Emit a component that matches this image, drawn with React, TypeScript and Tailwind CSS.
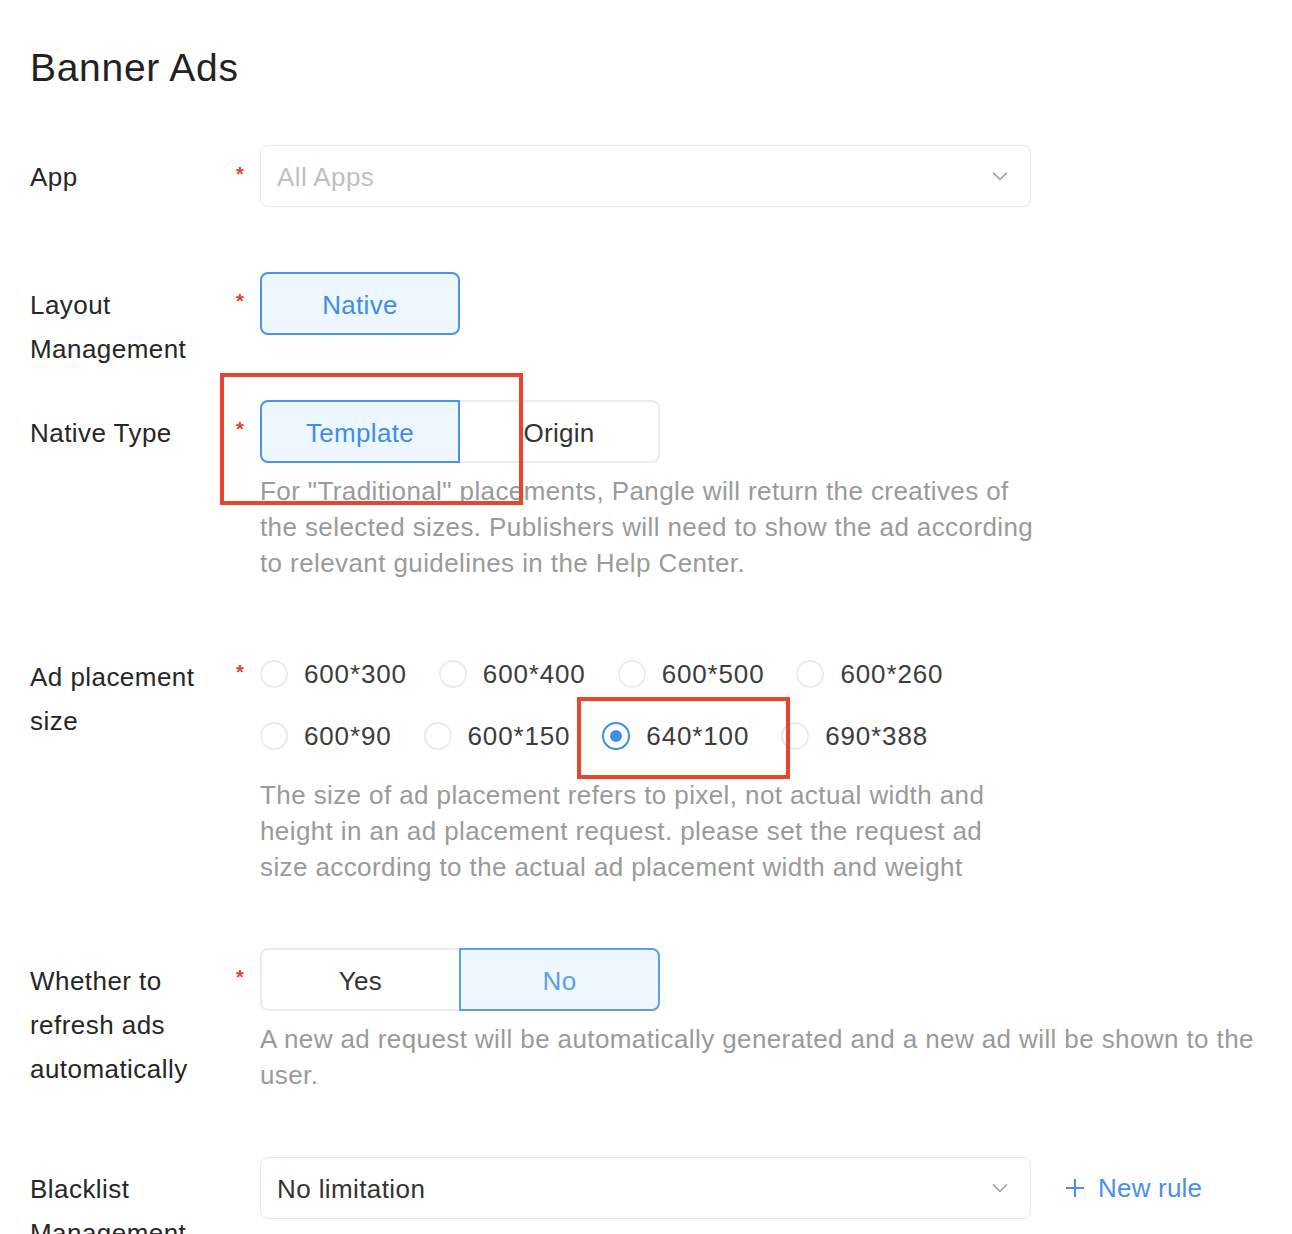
import React from "react";

const sizes = [
  ["600*300", "600*400", "600*500", "600*260"],
  ["600*90", "600*150", "640*100", "690*388"],
];

function Asterisk({ show = true }: { show?: boolean }) {
  return (
    <div className="w-[40px] flex-none flex justify-center pt-[20px]">
      {show && <span className="text-[#e8412c] text-[20px] leading-[18px] font-bold">*</span>}
    </div>
  );
}

function Chevron() {
  return (
    <svg width="16" height="10" viewBox="0 0 16 10" fill="none">
      <path d="M1 1.5 L8 8.5 L15 1.5" stroke="#9a9a9a" strokeWidth="1.4" />
    </svg>
  );
}

function Label({ lines, pt = "pt-[11px]" }: { lines: string[]; pt?: string }) {
  return (
    <div className={`w-[190px] flex-none text-[26px] leading-[44px] tracking-[0.45px] text-[#262626] ${pt}`}>
      {lines.map((l) => (
        <div key={l} className="whitespace-nowrap">
          {l}
        </div>
      ))}
    </div>
  );
}

function Help({ lines }: { lines: string[] }) {
  return (
    <div className="mt-[10px] text-[26px] leading-[36px] tracking-[0.4px] text-[#9a9a9a]">
      {lines.map((l) => (
        <div key={l} className="whitespace-nowrap">
          {l}
        </div>
      ))}
    </div>
  );
}

export default function App() {
  const selected = "640*100";

  return (
    <div className="relative min-h-screen bg-white px-[30px] font-['Liberation_Sans',Arial,sans-serif]">
      <h1 className="pt-[44px] text-[39px] leading-[48px] text-[#222] tracking-[0.7px]">Banner Ads</h1>

      {/* App */}
      <div className="mt-[53px] mb-[65px] flex items-start">
        <Label lines={["App"]} pt="pt-[10px]" />
        <Asterisk />
        <div className="w-[771px] h-[62px] flex items-center justify-between rounded-lg border border-[#e8e8e8] pl-4 pr-[22px]">
          <span className="pt-[2px] text-[26px] tracking-[0.4px] text-[#bfbfbf]">All Apps</span>
          <Chevron />
        </div>
      </div>

      {/* Layout Management */}
      <div className="mb-[29px] flex items-start">
        <Label lines={["Layout", "Management"]} />
        <Asterisk />
        <button className="w-[200px] h-[63px] pt-[4px] rounded-lg border-2 border-[#4a94e6] bg-[#eef6ff] text-[26px] tracking-[0.3px] text-[#3d8ee6]">
          Native
        </button>
      </div>

      {/* Native Type */}
      <div className="mb-[62px] flex items-start">
        <Label lines={["Native Type"]} />
        <Asterisk />
        <div>
          <div className="flex">
            <button className="w-[200px] h-[63px] pt-[4px] rounded-l-lg border-2 border-[#4a94e6] bg-[#eef6ff] text-[26px] tracking-[0.3px] text-[#3d8ee6]">
              Template
            </button>
            <button className="w-[200px] h-[63px] pt-[4px] rounded-r-lg border-2 border-l-0 border-[#ececec] bg-white text-[26px] tracking-[0.3px] text-[#333]">
              Origin
            </button>
          </div>
          <Help
            lines={[
              'For "Traditional" placements, Pangle will return the creatives of',
              "the selected sizes. Publishers will need to show the ad according",
              "to relevant guidelines in the Help Center.",
            ]}
          />
        </div>
      </div>

      {/* Ad placement size */}
      <div className="mb-[63px] flex items-start">
        <Label lines={["Ad placement", "size"]} pt="pt-[12px]" />
        <Asterisk />
        <div>
          {sizes.map((row, i) => (
            <div key={i} className="flex h-[62px]">
              {row.map((s) => {
                const on = s === selected;
                return (
                  <div key={s} className="flex items-center mr-[32px]">
                    <span
                      className={`w-[28px] h-[28px] rounded-full border-2 flex items-center justify-center ${
                        on ? "border-[#3d8ee6]" : "border-[#ececec]"
                      }`}
                    >
                      {on && <span className="w-[12px] h-[12px] rounded-full bg-[#3d8ee6]" />}
                    </span>
                    <span className="ml-[16px] text-[26px] tracking-[0.85px] text-[#3c3c3c]">{s}</span>
                  </div>
                );
              })}
            </div>
          ))}
          <Help
            lines={[
              "The size of ad placement refers to pixel, not actual width and",
              "height in an ad placement request. please set the request ad",
              "size according to the actual ad placement width and weight",
            ]}
          />
        </div>
      </div>

      {/* Refresh */}
      <div className="mb-[64px] flex items-start">
        <Label lines={["Whether to", "refresh ads", "automatically"]} />
        <Asterisk />
        <div>
          <div className="flex">
            <button className="w-[199px] h-[63px] pt-[4px] rounded-l-lg border-2 border-r-0 border-[#ececec] bg-white text-[26px] tracking-[0.3px] text-[#333]">
              Yes
            </button>
            <button className="w-[201px] h-[63px] pt-[4px] rounded-r-lg border-2 border-[#5aa0ea] bg-[#eef6ff] text-[26px] tracking-[0.3px] text-[#5aa0ea]">
              No
            </button>
          </div>
          <Help
            lines={[
              "A new ad request will be automatically generated and a new ad will be shown to the",
              "user.",
            ]}
          />
        </div>
      </div>

      {/* Blacklist */}
      <div className="flex items-start pb-[40px]">
        <Label lines={["Blacklist", "Management"]} pt="pt-[10px]" />
        <Asterisk show={false} />
        <div className="w-[771px] h-[62px] flex items-center justify-between rounded-lg border border-[#e8e8e8] pl-4 pr-[22px]">
          <span className="pt-[2px] text-[26px] tracking-[0.4px] text-[#333]">No limitation</span>
          <Chevron />
        </div>
        <div className="ml-[35px] h-[62px] flex items-center gap-[14px] text-[26px] tracking-[0.2px] text-[#4a8fe8]">
          <svg width="18" height="18" viewBox="0 0 18 18" fill="none">
            <path d="M9 0 V18 M0 9 H18" stroke="#4a8fe8" strokeWidth="2" />
          </svg>
          <span>New rule</span>
        </div>
      </div>

      {/* annotation boxes */}
      <div className="absolute left-[220px] top-[373px] w-[303px] h-[132px] border-4 border-[#e9442e] pointer-events-none" />
      <div className="absolute left-[577px] top-[697px] w-[213px] h-[82px] border-4 border-[#e9442e] pointer-events-none" />
    </div>
  );
}
